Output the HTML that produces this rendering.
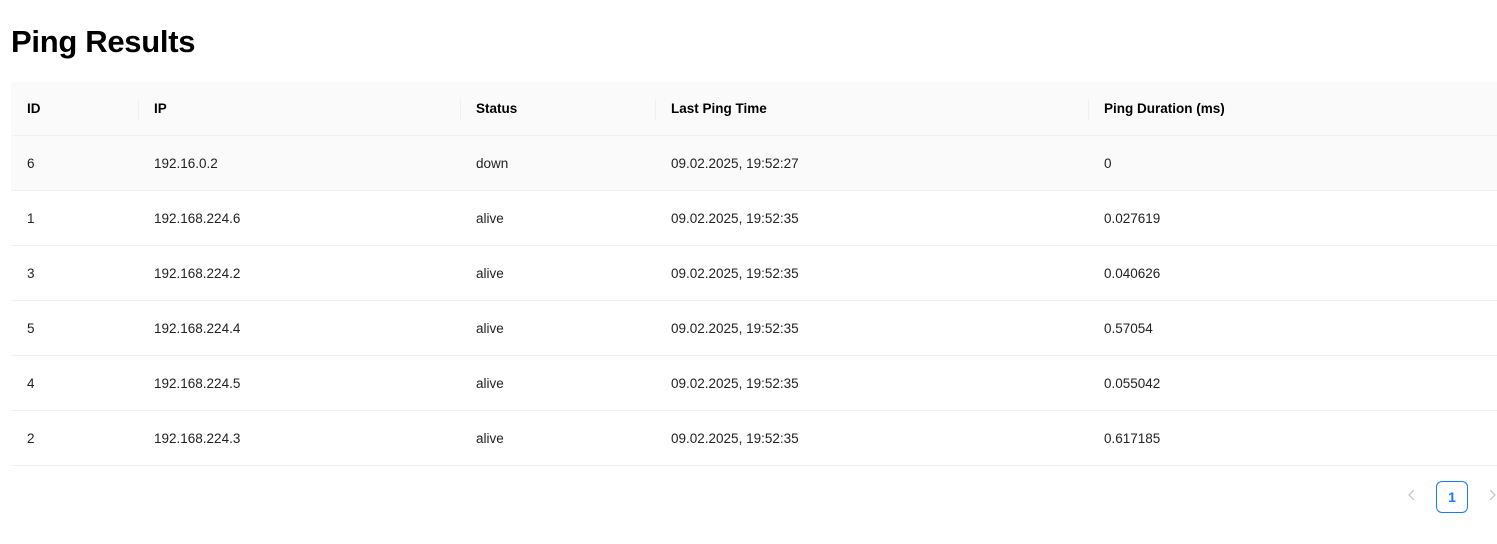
<!DOCTYPE html><html><head><style>
body{margin:0;background:#fff;font-family:"Liberation Sans",sans-serif;color:rgba(0,0,0,.88);}
h1{position:absolute;left:11px;top:24px;margin:0;font-size:31px;font-weight:bold;color:#000;letter-spacing:-0.3px}
table{position:absolute;left:11px;top:82px;width:1486px;border-collapse:collapse;font-size:13.5px}
th,td{text-align:left;padding:0 16px;height:54px;border-bottom:1px solid #f0f0f0}
th{background:#fafafa;font-weight:bold;color:#000;position:relative;height:53px}
th+th::before{content:"";position:absolute;left:0;top:17px;height:22px;width:1px;background:#f0f0f0}
tr.g td{background:#fafafa}
td{color:#222}
.pg{position:absolute;top:481px;left:1436px;border:1px solid #1677ff;border-radius:6px;color:#1677ff;font-size:14px;font-weight:bold;text-align:center;line-height:30px;box-sizing:border-box;width:32px;height:32px}
.ar{position:absolute;top:487px;color:#bbb;font-size:16px}
</style></head><body>
<h1>Ping Results</h1>
<table>
<colgroup><col style="width:127px"><col style="width:322px"><col style="width:195px"><col style="width:433px"><col></colgroup>
<tr><th>ID</th><th>IP</th><th>Status</th><th>Last Ping Time</th><th>Ping Duration (ms)</th></tr>
<tr class="g"><td>6</td><td>192.16.0.2</td><td>down</td><td>09.02.2025, 19:52:27</td><td>0</td></tr>
<tr><td>1</td><td>192.168.224.6</td><td>alive</td><td>09.02.2025, 19:52:35</td><td>0.027619</td></tr>
<tr><td>3</td><td>192.168.224.2</td><td>alive</td><td>09.02.2025, 19:52:35</td><td>0.040626</td></tr>
<tr><td>5</td><td>192.168.224.4</td><td>alive</td><td>09.02.2025, 19:52:35</td><td>0.57054</td></tr>
<tr><td>4</td><td>192.168.224.5</td><td>alive</td><td>09.02.2025, 19:52:35</td><td>0.055042</td></tr>
<tr><td>2</td><td>192.168.224.3</td><td>alive</td><td>09.02.2025, 19:52:35</td><td>0.617185</td></tr>
</table>
<svg class="ar" style="left:1406px" width="12" height="16" viewBox="0 0 12 16"><path d="M8 3L3 8l5 5" fill="none" stroke="#c8c8c8" stroke-width="1.3"/></svg>
<div class="pg">1</div>
<svg class="ar" style="left:1486px" width="12" height="16" viewBox="0 0 12 16"><path d="M4 3l5 5-5 5" fill="none" stroke="#c8c8c8" stroke-width="1.3"/></svg>
</body></html>
